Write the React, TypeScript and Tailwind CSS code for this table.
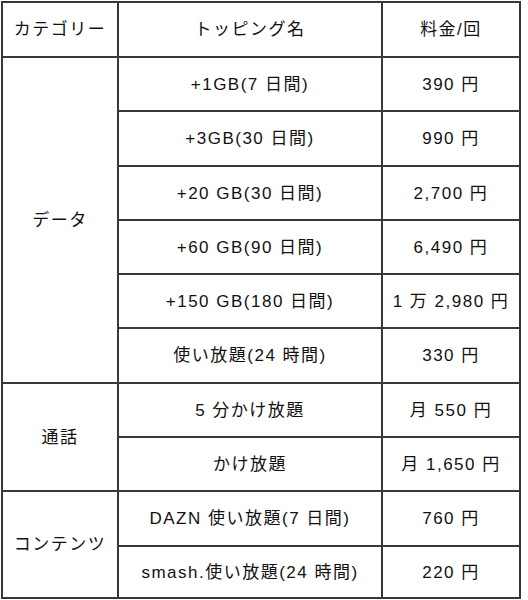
import React from "react";

const font = {
  fontFamily: '"Liberation Sans", "Noto Sans CJK JP", sans-serif',
};

function Cell({
  children,
  className = "",
}: {
  children?: React.ReactNode;
  className?: string;
}) {
  return (
    <div
      className={
        "flex items-center justify-center bg-white text-[17px] leading-none tracking-[1.5px] text-[#111111] whitespace-nowrap " +
        className
      }
    >
      {children}
    </div>
  );
}

export default function App() {
  const data = [
    ["+1GB(7 日間)", "390 円"],
    ["+3GB(30 日間)", "990 円"],
    ["+20 GB(30 日間)", "2,700 円"],
    ["+60 GB(90 日間)", "6,490 円"],
    ["+150 GB(180 日間)", "1 万 2,980 円"],
    ["使い放題(24 時間)", "330 円"],
  ];
  const call = [
    ["5 分かけ放題", "月 550 円"],
    ["かけ放題", "月 1,650 円"],
  ];
  const contents = [
    ["DAZN 使い放題(7 日間)", "760 円"],
    ["smash.使い放題(24 時間)", "220 円"],
  ];
  return (
    <div className="w-[528px] h-[600px] bg-white pt-[1px] pl-[1px]" style={font}>
      <div className="grid w-[520px] grid-cols-[114px_262px_136px] grid-rows-[53px_52px_53px_52px_52px_52px_53px_52px_52px_53px_50px] gap-[2px] bg-[#383838] p-[2px]">
        <Cell className="bg-[#b4c7e7]">カテゴリー</Cell>
        <Cell className="bg-[#b4c7e7]">トッピング名</Cell>
        <Cell className="bg-[#b4c7e7]">料金/回</Cell>

        <Cell className="row-span-6">データ</Cell>
        {data.map(([a, b]) => (
          <React.Fragment key={a}>
            <Cell>{a}</Cell>
            <Cell>{b}</Cell>
          </React.Fragment>
        ))}

        <Cell className="row-span-2">通話</Cell>
        {call.map(([a, b]) => (
          <React.Fragment key={a}>
            <Cell>{a}</Cell>
            <Cell>{b}</Cell>
          </React.Fragment>
        ))}

        <Cell className="row-span-2">コンテンツ</Cell>
        {contents.map(([a, b]) => (
          <React.Fragment key={a}>
            <Cell>{a}</Cell>
            <Cell>{b}</Cell>
          </React.Fragment>
        ))}
      </div>
    </div>
  );
}
